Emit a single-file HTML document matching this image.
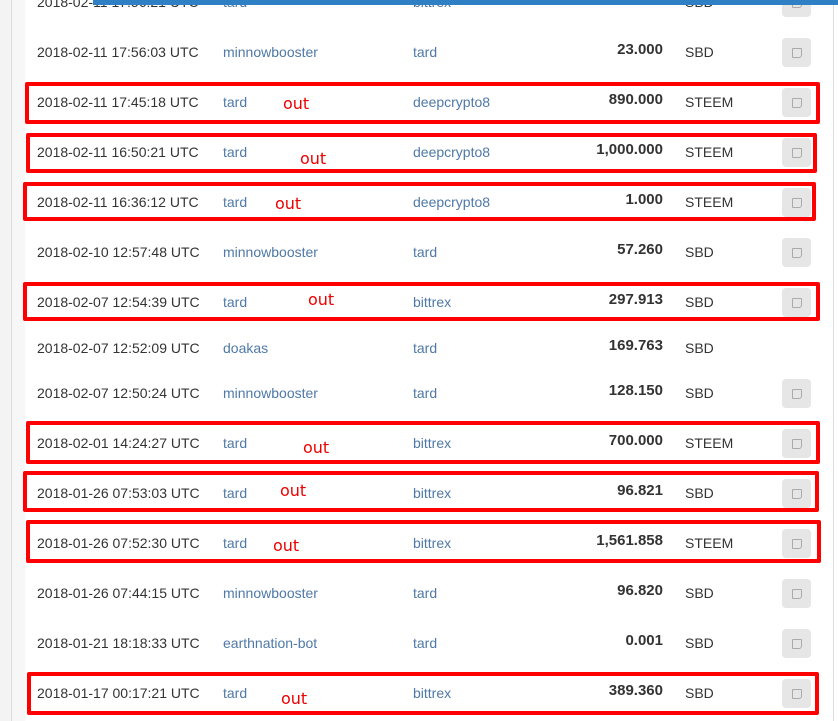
<!DOCTYPE html>
<html><head><meta charset="utf-8"><style>
body{margin:0;width:838px;height:721px;overflow:hidden;background:#fff;font-family:"Liberation Sans",sans-serif;font-size:14px;color:#333;position:relative}
.l{position:absolute;left:0;top:0;width:11px;height:721px;background:#f3f3f3;border-right:1px solid #ddd}
.l2{position:absolute;left:12px;top:0;width:13px;height:721px;background:#f7f7f7}
.r{position:absolute;left:833px;top:0;width:1px;height:721px;background:#ddd}
.bar{position:absolute;left:93px;top:0;width:745px;height:5px;background:#2f7fc4;z-index:2}
.t{position:absolute;white-space:nowrap;line-height:16px}
.a{color:#4f79a8}
.n{font-weight:bold;color:#333;text-align:right;width:200px;font-size:15px}
.b{position:absolute;left:782px;width:29px;height:29px;background:#e6e6e6;border-radius:4px}
.b:after{content:"";position:absolute;left:10px;top:10px;width:8px;height:8px;border:1px solid #aaa;border-radius:1px 1px 3px 1px}
.box{position:absolute;border:4px solid #f00;border-radius:2px;box-sizing:border-box}
.o{position:absolute;color:#e00;font-family:"DejaVu Sans",sans-serif;font-size:16px;line-height:18px}
</style></head><body>
<div class="l"></div><div class="l2"></div><div class="r"></div>
<div class="bar"></div>
<div id="rows"></div>
<script>
var rows=[
[2,"2018-02-11 17:56:21 UTC","tard","bittrex","96.260","SBD",1],
[52,"2018-02-11 17:56:03 UTC","minnowbooster","tard","23.000","SBD",1],
[102,"2018-02-11 17:45:18 UTC","tard","deepcrypto8","890.000","STEEM",1],
[152,"2018-02-11 16:50:21 UTC","tard","deepcrypto8","1,000.000","STEEM",1],
[202,"2018-02-11 16:36:12 UTC","tard","deepcrypto8","1.000","STEEM",1],
[252,"2018-02-10 12:57:48 UTC","minnowbooster","tard","57.260","SBD",1],
[302,"2018-02-07 12:54:39 UTC","tard","bittrex","297.913","SBD",1],
[348,"2018-02-07 12:52:09 UTC","doakas","tard","169.763","SBD",0],
[393,"2018-02-07 12:50:24 UTC","minnowbooster","tard","128.150","SBD",1],
[443,"2018-02-01 14:24:27 UTC","tard","bittrex","700.000","STEEM",1],
[493,"2018-01-26 07:53:03 UTC","tard","bittrex","96.821","SBD",1],
[543,"2018-01-26 07:52:30 UTC","tard","bittrex","1,561.858","STEEM",1],
[593,"2018-01-26 07:44:15 UTC","minnowbooster","tard","96.820","SBD",1],
[643,"2018-01-21 18:18:33 UTC","earthnation-bot","tard","0.001","SBD",1],
[693,"2018-01-17 00:17:21 UTC","tard","bittrex","389.360","SBD",1]];
var h="";
rows.forEach(function(r){var y=r[0]-8;
h+='<div class="t" style="left:37px;top:'+y+'px">'+r[1]+'</div>';
h+='<div class="t a" style="left:223px;top:'+y+'px">'+r[2]+'</div>';
h+='<div class="t a" style="left:413px;top:'+y+'px">'+r[3]+'</div>';
h+='<div class="t n" style="left:463px;top:'+(y-2)+'px">'+r[4]+'</div>';
h+='<div class="t" style="left:685px;top:'+y+'px">'+r[5]+'</div>';
if(r[6])h+='<div class="b" style="top:'+(r[0]-14)+'px"></div>';});
[[25,82,795,42],[26,133,791,40],[23,182,793,39],[23,282,797,39],[26,421,794,43],[23,471,796,41],[26,520,795,43],[27,672,792,43]].forEach(function(b){
h+='<div class="box" style="left:'+b[0]+'px;top:'+b[1]+'px;width:'+b[2]+'px;height:'+b[3]+'px"></div>';});
[[283,104],[300,159],[275,204],[308,300],[303,448],[280,491],[273,546],[281,699]].forEach(function(o){
h+='<div class="o" style="left:'+o[0]+'px;top:'+(o[1]-9)+'px">out</div>';});
document.getElementById("rows").innerHTML=h;
</script>
</body></html>
